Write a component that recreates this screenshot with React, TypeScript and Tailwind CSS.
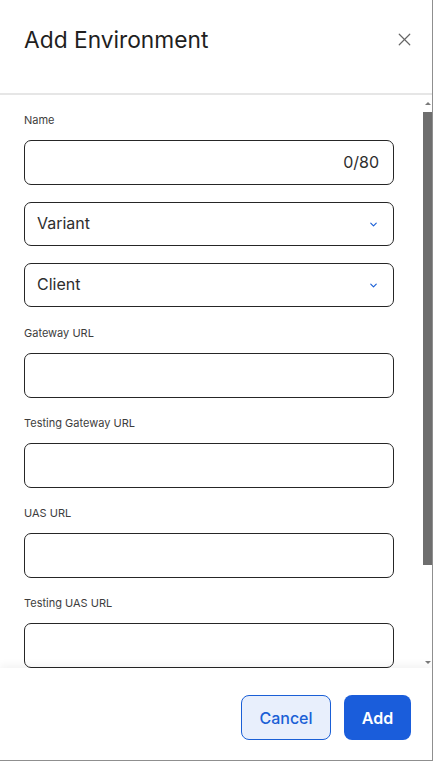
import { X, ChevronDown } from 'lucide-react';

const urlFields = ['Gateway URL', 'Testing Gateway URL', 'UAS URL', 'Testing UAS URL'];

function Label({ text }: { text: string }) {
  return <div className="text-[11px] leading-[14px] text-[#3d3d3d] mb-[13px]">{text}</div>;
}

function SelectBox({ value }: { value: string }) {
  return (
    <div className="h-[44px] shrink-0 mt-[17px] rounded-[7px] border border-[#262626] flex items-center justify-between pl-[12px] pr-[14px] pb-[2px]">
      <span className="text-[16px] text-[#2e2e2e]">{value}</span>
      <ChevronDown size={11} strokeWidth={2.5} color="#1a5fd6" className="mt-[3px]" />
    </div>
  );
}

export default function App() {
  return (
    <div
      className="w-[433px] h-[761px] flex flex-col bg-white border-r border-b border-[#8f8f8f] overflow-hidden"
      style={{ fontFamily: 'Inter, "Noto Sans", sans-serif' }}
    >
      {/* Header */}
      <div className="h-[93px] shrink-0 flex items-start justify-between pl-[24px] pr-[17px] pt-[25px]">
        <h2 className="text-[22.75px] leading-[30px] text-[#1f1f1f]">Add Environment</h2>
        <X size={21} strokeWidth={1.4} color="#666666" className="mt-[4px]" />
      </div>
      <div className="h-[2px] shrink-0 bg-[#e6e6e6]" />

      {/* Scroll area */}
      <div className="flex flex-1 min-h-0">
        <div className="flex-1 overflow-hidden pl-[24px] pr-[29px] pt-[18px] flex flex-col">
          <div className="flex flex-col shrink-0">
            <Label text="Name" />
            <div className="h-[45px] shrink-0 rounded-[7px] border border-[#262626] flex items-center justify-end pr-[14px] pb-[2px]">
              <span className="text-[16px] text-[#2e2e2e]">0/80</span>
            </div>
          </div>
          <SelectBox value="Variant" />
          <SelectBox value="Client" />
          {urlFields.map((f, i) => (
            <div key={f} className={'flex flex-col shrink-0 ' + (i === 0 ? 'mt-[19px]' : 'mt-[18px]')}>
              <Label text={f} />
              <div className="h-[45px] shrink-0 rounded-[7px] border border-[#262626]" />
            </div>
          ))}
        </div>

        {/* Scrollbar */}
        <div className="w-[9px] shrink-0 flex flex-col items-center">
          <div className="h-[17px] shrink-0 flex items-center justify-center">
            <div className="w-0 h-0 border-l-[3px] border-r-[3px] border-b-[3px] border-l-transparent border-r-transparent border-b-[#7a7a7a]" />
          </div>
          <div className="w-full h-[453px] shrink-0 bg-[#6e6e6e]" />
          <div className="flex-1" />
          <div className="h-[12px] shrink-0 flex items-center justify-center">
            <div className="w-0 h-0 border-l-[3px] border-r-[3px] border-t-[3px] border-l-transparent border-r-transparent border-t-[#7a7a7a]" />
          </div>
        </div>
      </div>

      {/* Footer */}
      <div className="h-[92px] shrink-0 flex items-start justify-end gap-[13px] pt-[27px] pr-[21px] bg-white shadow-[0_-3px_8px_rgba(0,0,0,0.05)] relative">
        <button className="h-[45px] w-[90px] rounded-[8px] border border-[#1a5fd6] bg-[#e8effc] text-[16px] font-medium text-[#1a5fd6]">
          Cancel
        </button>
        <button className="h-[45px] w-[67px] rounded-[8px] bg-[#1a5ddb] text-[16px] font-semibold text-white">
          Add
        </button>
      </div>
    </div>
  );
}
